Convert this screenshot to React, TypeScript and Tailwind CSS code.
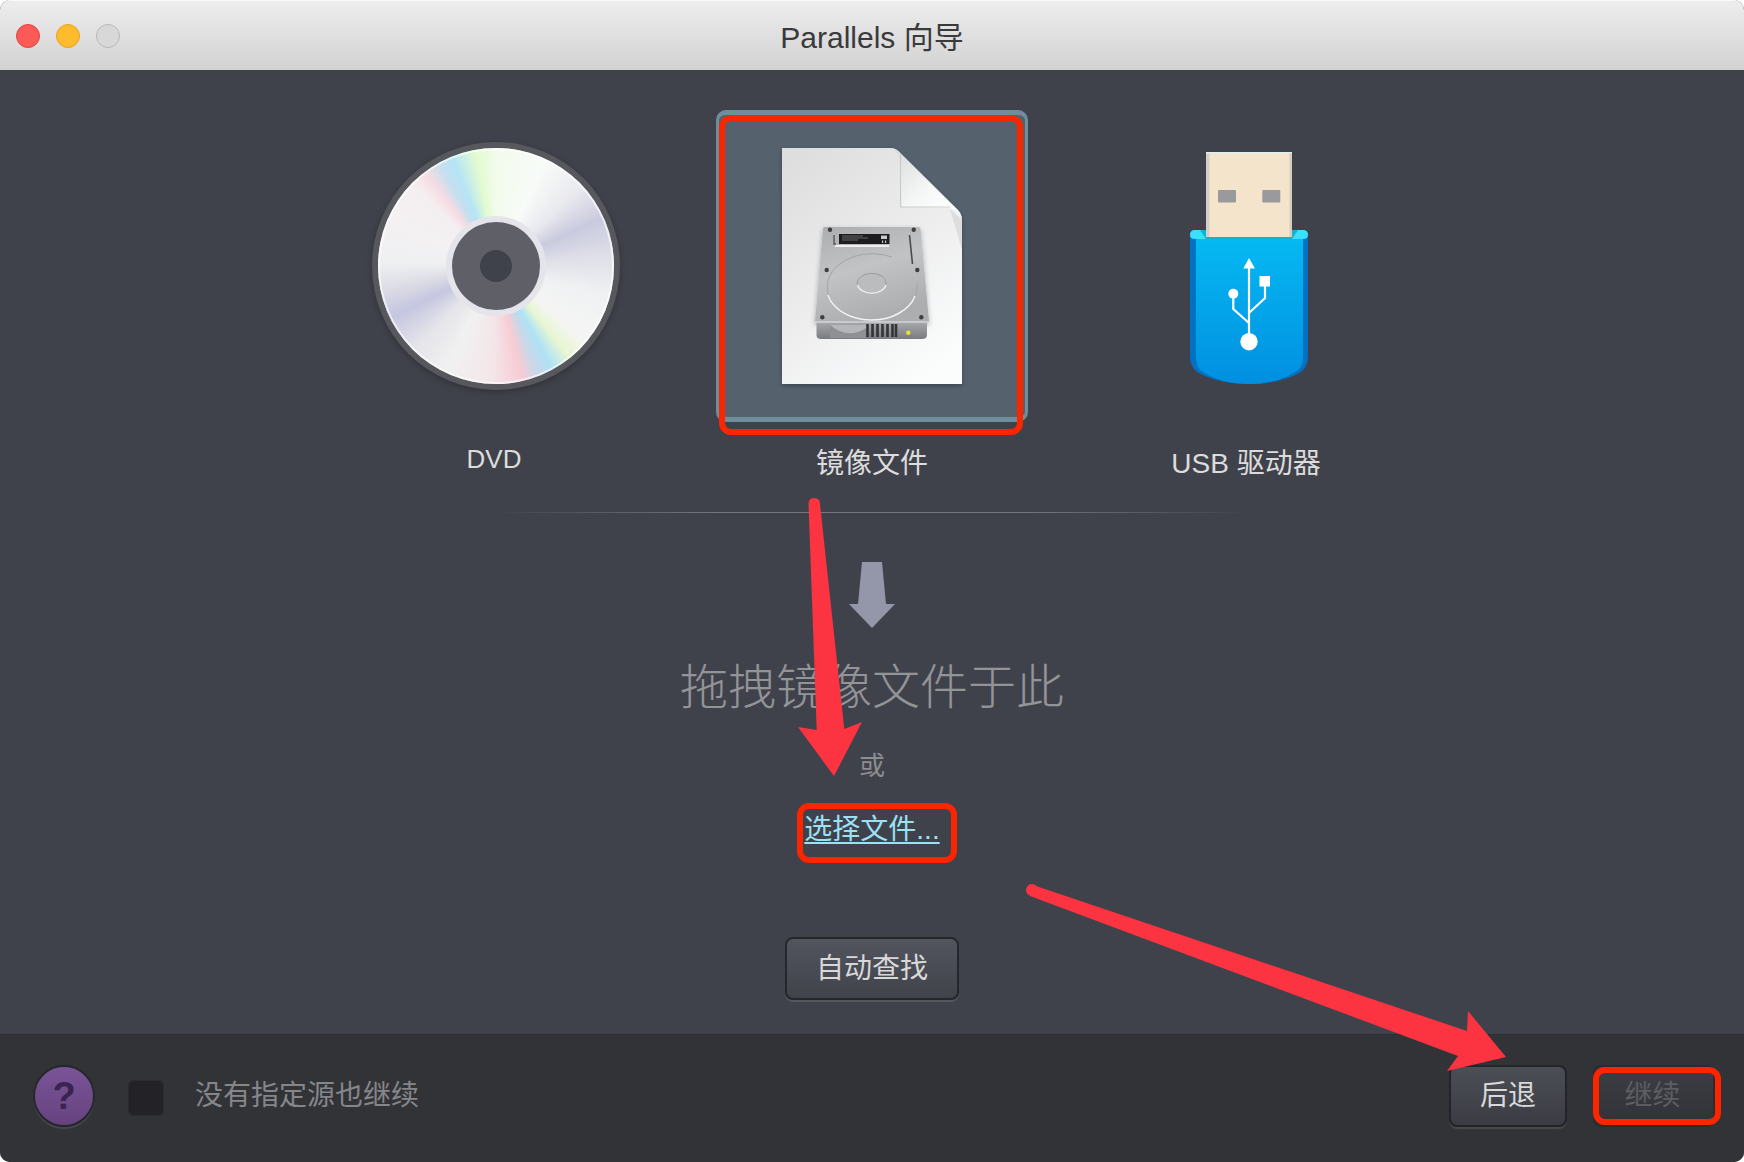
import React from "react";

function Disc() {
  return (
    <div className="flex h-[248px] w-[248px] items-center justify-center rounded-full bg-[#57585e] shadow-[0_2px_6px_rgba(0,0,0,0.25)]">
      <div className="flex h-[236px] w-[236px] items-center justify-center rounded-full bg-[conic-gradient(#f2fbec_0deg,#f8fbf8_25deg,#e8e8ee_48deg,#c9cade_66deg,#dfe0e8_85deg,#f0f1f3_105deg,#f4f5f3_130deg,#e8f6d2_141deg,#aee2f6_151deg,#c8d8e8_159deg,#f7ccd4_167deg,#f3e6e9_182deg,#f1f1f1_205deg,#e4e4ea_225deg,#c5c6e0_244deg,#dcdce6_258deg,#eff0f2_272deg,#f4f1f2_295deg,#f4eef0_315deg,#f6dce2_323deg,#c6dfee_331deg,#b5e4f6_338deg,#e2fbd0_350deg,#f2fbec_360deg)] shadow-[inset_0_0_0_2px_rgba(255,255,255,0.65)]">
        <div className="flex h-[100px] w-[100px] items-center justify-center rounded-full bg-[#e4e4ea]">
          <div className="flex h-[88px] w-[88px] items-center justify-center rounded-full bg-[#5e5f67]">
            <div className="h-[32px] w-[32px] rounded-full bg-[#40424b]" />
          </div>
        </div>
      </div>
    </div>
  );
}

function FileIcon() {
  return (
    <svg width="190" height="246" viewBox="777 143 190 246">
      <defs>
        <linearGradient id="fileFill" x1="0.15" y1="0" x2="0.75" y2="1">
          <stop offset="0" stopColor="#dedede" />
          <stop offset="0.55" stopColor="#eeeeef" />
          <stop offset="1" stopColor="#fbfdfd" />
        </linearGradient>
        <linearGradient id="foldFill" x1="0" y1="0" x2="1" y2="1">
          <stop offset="0" stopColor="#d8dada" />
          <stop offset="0.55" stopColor="#f6f8f8" />
          <stop offset="1" stopColor="#ffffff" />
        </linearGradient>
        <linearGradient id="hddTop" x1="0" y1="0" x2="0.35" y2="1">
          <stop offset="0" stopColor="#acadaf" />
          <stop offset="0.5" stopColor="#c2c3c5" />
          <stop offset="1" stopColor="#adaeb0" />
        </linearGradient>
        <linearGradient id="hddFront" x1="0" y1="0" x2="0" y2="1">
          <stop offset="0" stopColor="#a5a6a9" />
          <stop offset="1" stopColor="#7a7b80" />
        </linearGradient>
        <filter id="softShadow" x="-10%" y="-10%" width="120%" height="120%">
          <feDropShadow dx="0" dy="2" stdDeviation="2.5" floodColor="#000" floodOpacity="0.3" />
        </filter>
      </defs>
      <path d="M782 148 H890 Q896 148 900 153 L957 209 Q962 214 962 220 V384 H782 Z" fill="url(#fileFill)" filter="url(#softShadow)" />
      <path d="M962 220 V250 L950 209 Z" fill="#c9cbcc" opacity="0.5" />
      <path d="M892 148 Q897 149 900.5 153 L957 209 Q960 212 962 218 Q955 208 948 208 L902 207 Q901 170 899 158 Q897 151 892 148 Z" fill="url(#foldFill)" />
      <path d="M900.5 155 V207 H950" fill="none" stroke="#bfc1c1" strokeWidth="0.8" />
      <path d="M900.5 153 L957 209" fill="none" stroke="#7c8288" strokeWidth="0.8" opacity="0.5" />
      <path d="M825 227 H918 Q920 227 920.5 229 L929 321 Q929 323 927 323 H817 Q815 323 815 321 L823 229 Q823 227 825 227 Z" fill="url(#hddTop)" filter="url(#softShadow)" />
      <path d="M816.5 323 H927 V335 Q927 339 922 339 H821 Q816.5 339 816.5 335 Z" fill="url(#hddFront)" />
      <path d="M815 322 H929" stroke="#e4e4e6" strokeWidth="1.2" />
      <rect x="839" y="234" width="50.5" height="10" fill="#1d1d1f" />
      <path d="M842 236 H863 M842 238 H868 M842 240 H858" stroke="#8a8a8c" strokeWidth="0.7" />
      <rect x="881" y="235.5" width="6" height="3.5" fill="#c9c9c9" />
      <rect x="882" y="240.5" width="1.2" height="2.5" fill="#c9c9c9" />
      <rect x="885" y="240.5" width="1.2" height="2.5" fill="#c9c9c9" />
      <path d="M834 235 V244 H836" fill="none" stroke="#55565a" strokeWidth="1.4" />
      <path d="M835 246 H889" stroke="#eeeeef" strokeWidth="2" />
      <path d="M909.5 235 L912.5 264" stroke="#4a4b4f" strokeWidth="1.6" />
      <path d="M892 257 A45 33 0 1 0 917 283" fill="none" stroke="#a3a4a7" strokeWidth="1" />
      <path d="M828 295 A45 33 0 0 0 915 296" fill="none" stroke="#f2f2f3" strokeWidth="1.5" />
      <ellipse cx="871.7" cy="283.3" rx="14.5" ry="10" fill="#bbbcbe" stroke="#9a9b9e" strokeWidth="1" />
      <path d="M857.5 285 A14.5 10 0 0 0 886 285" fill="none" stroke="#ececed" strokeWidth="1.5" />
      {[[830, 229.7], [913.7, 229.7], [826.7, 270], [917.3, 270], [822.3, 317.3], [921.3, 317.3]].map(([x, y]) => (
        <circle key={x} cx={x} cy={y} r="2.2" fill="#3e3f43" />
      ))}
      <rect x="830" y="325" width="36" height="13" fill="#8f9094" />
      <path d="M830 325 Q848 340 866 328 V325 Z" fill="#b5b6b9" />
      <path d="M867.5 324 V337 M872.5 324 V337 M877.5 324 V337 M882.5 324 V337 M887.5 324 V337 M892.5 324 V337 M896 324 V337" stroke="#333438" strokeWidth="2.6" />
      <circle cx="908.3" cy="332.7" r="2.2" fill="#e6e238" />
    </svg>
  );
}

function UsbIcon() {
  return (
    <svg width="124" height="236" viewBox="1187 150 124 236" className="mt-[4px]">
      <defs>
        <linearGradient id="usbBody" x1="0" y1="0" x2="0" y2="1">
          <stop offset="0" stopColor="#05b9f2" />
          <stop offset="1" stopColor="#018fe0" />
        </linearGradient>
      </defs>
      <path d="M1190 235 Q1190 230 1195 230 H1303 Q1308 230 1308 235 V356 Q1308 366 1301 372 Q1280 384 1249 384 Q1218 384 1197 372 Q1190 366 1190 356 Z" fill="#0072c4" />
      <path d="M1196 238 H1303 V356 Q1303 366 1298 370 Q1278 384 1249 384 Q1220 384 1200 370 Q1196 364 1196 356 Z" fill="url(#usbBody)" />
      <path d="M1190 235 Q1190 230 1195 230 H1303 Q1308 230 1308 235 Q1308 239 1303 239 H1195 Q1190 239 1190 235 Z" fill="#3be0ff" />
      <path d="M1200 230 H1298 L1292 239 H1206 Z" fill="#0fb2d8" />
      <rect x="1206" y="152" width="86" height="85" rx="1" fill="#f3e4cb" />
      <rect x="1206" y="152" width="3.5" height="85" fill="#d3d0ca" />
      <rect x="1289.5" y="152" width="2.5" height="85" fill="#d6cdbc" />
      <rect x="1206" y="152" width="86" height="1.5" fill="#def2ee" />
      <rect x="1218" y="190" width="18" height="12.5" rx="1" fill="#9a9a9d" />
      <rect x="1262.3" y="190" width="18" height="12.5" rx="1" fill="#9a9a9d" />
      <path d="M1249 258 L1255 268.5 H1243.3 Z" fill="#fff" />
      <path d="M1249 266 V342" stroke="#fff" strokeWidth="2.2" fill="none" />
      <circle cx="1249" cy="341.7" r="8.7" fill="#fff" />
      <circle cx="1233.3" cy="293.7" r="5" fill="#fff" />
      <path d="M1233.3 294 V309 L1249 323" stroke="#fff" strokeWidth="2.2" fill="none" />
      <rect x="1259.5" y="276" width="10.5" height="10.5" fill="#fff" />
      <path d="M1265 286 V298 L1249 313" stroke="#fff" strokeWidth="2.2" fill="none" />
    </svg>
  );
}

export default function App() {
  const sans = "font-['Liberation_Sans','Noto_Sans_CJK_SC',sans-serif]";
  return (
    <div className={`relative flex h-[1162px] w-[1744px] flex-col overflow-hidden rounded-[10px] bg-[#40424b] ${sans}`}>
      <header className="relative flex h-[70px] shrink-0 items-center bg-[linear-gradient(#eeeeee,#d2d2d2)] pt-[2px] pl-[16px] shadow-[inset_0_1px_0_#f8f8f8]">
        <div className="flex gap-[16px]">
          <span className="h-[24px] w-[24px] rounded-full border border-[#e0443e] bg-[#fc5a56]" />
          <span className="h-[24px] w-[24px] rounded-full border border-[#e8a21f] bg-[#fdbb2d]" />
          <span className="h-[24px] w-[24px] rounded-full border border-[#b8b8b8] bg-[#d8d8d8]" />
        </div>
        <h1 className="absolute inset-x-0 top-[17px] text-center text-[30px] leading-[42px] font-normal text-[#3a3a3c]">Parallels 向导</h1>
      </header>

      <main className="flex min-h-0 flex-1 flex-col items-center pt-[40px]">
        <div className="flex items-start">
          <div className="flex w-[444px] flex-col items-center pl-[4px]">
            <div className="flex h-[312px] items-center justify-center"><Disc /></div>
            <p className="mt-[17px] pr-[4px] text-[26px] leading-[40px] text-[#dcdcdc]">DVD</p>
          </div>
          <div className="flex w-[312px] flex-col items-center">
            <div className="relative flex h-[312px] w-[312px] items-center justify-center rounded-[10px] border-x-[3px] border-t-[5px] border-b-[5px] border-[#6e8e9c] bg-[#55626e]">
              <FileIcon />
              <div className="absolute top-[0px] right-[2px] bottom-[-18px] left-[0px] rounded-[12px] border-[6px] border-[#fb2500]" />
            </div>
            <p className="mt-[22px] text-[28px] leading-[40px] text-[#dcdcdc]">镜像文件</p>
          </div>
          <div className="flex w-[444px] flex-col items-center pr-[2px]">
            <div className="flex h-[312px] items-center justify-center"><UsbIcon /></div>
            <p className="mt-[22px] pr-[6px] text-[28px] leading-[40px] text-[#dcdcdc]">USB 驱动器</p>
          </div>
        </div>

        <div className="mt-[28px] h-[1px] w-[760px] bg-[linear-gradient(90deg,transparent,#75767c_30%,#75767c_70%,transparent)]" />

        <svg className="mt-[49px] shrink-0" width="46" height="66" viewBox="848 562 46 66">
          <path d="M861 562 H881 L885 604 H894 L871 628 L848 604 H857 Z" fill="#9497aa" />
        </svg>

        <p className="mt-[30px] text-[48px] leading-[60px] font-light text-[#939498]">拖拽镜像文件于此</p>
        <p className="mt-[30px] text-[26px] leading-[36px] text-[#8c8d91]">或</p>
        <div className="relative mt-[26px]">
          <a className="block text-[28px] leading-[40px] text-[#9be0f5] underline decoration-2 underline-offset-[3px]">选择文件...</a>
          <div className="absolute top-[-7px] right-[-17px] bottom-[-13px] left-[-7px] rounded-[12px] border-[6px] border-[#fb2500]" />
        </div>
        <button className="mt-[87px] h-[63px] w-[174px] rounded-[8px] border-2 border-[#26272b] bg-[linear-gradient(#52555e,#41434b)] text-[28px] text-[#d8d8d8] shadow-[0_2px_0_#55565c]">自动查找</button>
      </main>

      <footer className="flex h-[128px] shrink-0 items-center border-t border-[#2d2e32] bg-[#323337] pr-[29px] pb-[5px] pl-[33px]">
        <div className="flex h-[62px] w-[62px] items-center justify-center rounded-full border-2 border-[#26272b] bg-[linear-gradient(#7a5498,#66437f)] text-[38px] leading-none font-bold text-[#3a2350] shadow-[0_2px_0_#47484c]">?</div>
        <span className="ml-[33px] mt-[3px] h-[36px] w-[36px] rounded-[6px] border border-[#2a2b2e] bg-[#232327]" />
        <span className="ml-[31px] text-[28px] text-[#85868a]">没有指定源也继续</span>
        <button className="ml-auto h-[62px] w-[118px] rounded-[8px] border-2 border-[#232428] bg-[linear-gradient(#4c4e56,#3b3c43)] text-[28px] text-[#d8d8d8] shadow-[0_2px_0_#47484c]">后退</button>
        <div className="relative ml-[26px]">
          <button className="block h-[62px] w-[122px] rounded-[8px] border-2 border-[#2a2b2f] bg-[linear-gradient(#3d3e45,#313237)] pr-[3px] text-[28px] text-[#5c5d63]">继续</button>
          <div className="absolute top-[2px] right-[-6px] bottom-[2px] left-[0px] rounded-[12px] border-[6px] border-[#fb2500]" />
        </div>
      </footer>

      <svg className="pointer-events-none absolute inset-0" width="1744" height="1162" viewBox="0 0 1744 1162">
        <path d="M808.5 504 Q808.5 498 814 498 Q820 498 820 504 L844.3 729 L862 722 L834 776 L798 727 L816.7 730 Z" fill="#fc3340" />
        <circle cx="1032" cy="890" r="6" fill="#fc3340" />
        <path d="M1030 884 L1467 1031 L1468 1011 L1506 1057 L1447 1071 L1458 1056 L1030 896 Z" fill="#fc3340" />
      </svg>
    </div>
  );
}
